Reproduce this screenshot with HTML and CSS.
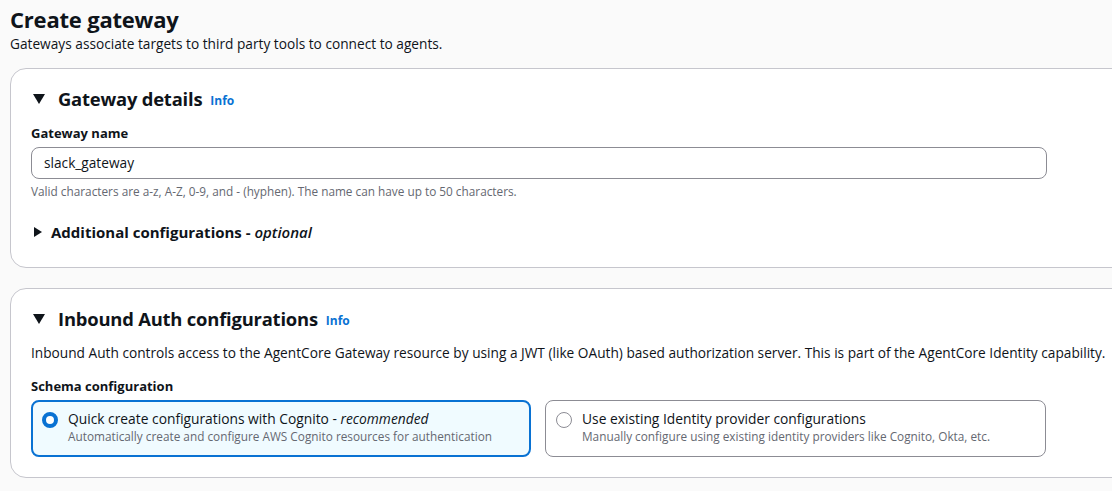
FILE: index.html
```html
<!DOCTYPE html>
<html>
<head>
<meta charset="utf-8">
<link rel="stylesheet" href="styles.css">
</head>
<body>
<div class="page">
  <header class="head">
    <h1 class="title">Create gateway</h1>
    <p class="subtitle">Gateways associate targets to third party tools to connect to agents.</p>
  </header>

  <section class="card card-details">
    <div class="card-head">
      <span class="caret caret-down"></span>
      <h2 class="card-title">Gateway details</h2>
      <a class="info">Info</a>
    </div>
    <div class="field">
      <label class="label">Gateway name</label>
      <div class="input">slack_gateway</div>
      <div class="hint">Valid characters are a-z, A-Z, 0-9, and - (hyphen). The name can have up to 50 characters.</div>
    </div>
    <div class="expander">
      <span class="caret caret-right"></span>
      <span class="exp-title">Additional configurations - <i>optional</i></span>
    </div>
  </section>

  <section class="card card-auth">
    <div class="card-head">
      <span class="caret caret-down"></span>
      <h2 class="card-title">Inbound Auth configurations</h2>
      <a class="info">Info</a>
    </div>
    <p class="desc">Inbound Auth controls access to the AgentCore Gateway resource by using a JWT (like OAuth) based authorization server. This is part of the AgentCore Identity capability.</p>
    <div class="label">Schema configuration</div>
    <div class="tiles">
      <div class="tile selected">
        <span class="radio on"></span>
        <div class="tile-text">
          <div class="tile-label">Quick create configurations with Cognito - <i>recommended</i></div>
          <div class="tile-desc">Automatically create and configure AWS Cognito resources for authentication</div>
        </div>
      </div>
      <div class="tile">
        <span class="radio"></span>
        <div class="tile-text">
          <div class="tile-label">Use existing Identity provider configurations</div>
          <div class="tile-desc">Manually configure using existing identity providers like Cognito, Okta, etc.</div>
        </div>
      </div>
    </div>
  </section>
</div>
</body>
</html>
```

FILE: styles.css
```css
* { box-sizing: border-box; }
html, body { margin: 0; padding: 0; }
body {
  background: #fafafa;
  font-family: "Open Sans", "Noto Sans", Arial, sans-serif;
  color: #0f141a;
  overflow: hidden;
  width: 1112px;
  height: 491px;
}
.page {
  padding: 4px 0 0 10px;
  width: 1140px;
}
.head { margin-bottom: 14px; }
.title {
  margin: 0;
  font-size: 22px;
  line-height: 30px;
  font-weight: 700;
  letter-spacing: -0.2px;
}
.subtitle {
  margin: 0;
  font-size: 13.7px;
  line-height: 20px;
  color: #0f141a;
}
.card {
  background: #fff;
  border: 1px solid #c6c6cd;
  border-radius: 16px;
  padding: 16px 20px 0 20px;
  margin-bottom: 20px;
}
.card-details { height: 200px; }
.card-auth { height: 190px; }
.card-head {
  display: flex;
  align-items: center;
  height: 28px;
  margin-top: 0;
}
.caret {
  display: inline-block;
  width: 0; height: 0;
}
.caret-down {
  border-left: 6px solid transparent;
  border-right: 6px solid transparent;
  border-top: 10px solid #0f141a;
  margin-left: 2px;
  margin-right: 13px;
}
.caret-right {
  border-top: 5px solid transparent;
  border-bottom: 5px solid transparent;
  border-left: 8px solid #0f141a;
  margin-left: 3px;
  margin-right: 9px;
}
.card-title {
  margin: 0;
  font-size: 18.4px;
  font-weight: 700;
  line-height: 28px;
  letter-spacing: -0.2px;
}
.info {
  color: #0972d3;
  font-size: 12px;
  font-weight: 700;
  margin-left: 8px;
  margin-top: 3px;
}
.field { margin-top: 10px; }
.label {
  display: block;
  font-size: 13px;
  font-weight: 700;
  line-height: 20px;
  margin-bottom: 4px;
}
.input {
  width: 1016px;
  height: 32px;
  border: 1px solid #8c8c94;
  border-radius: 8px;
  padding: 0 12px;
  font-size: 13.7px;
  line-height: 30px;
  background: #fff;
}
.hint {
  font-size: 11.8px;
  color: #656871;
  line-height: 16px;
  margin-top: 4px;
}
.expander {
  display: flex;
  align-items: center;
  margin-top: 22px;
  height: 22px;
}
.exp-title {
  font-size: 15px;
  font-weight: 700;
}
.exp-title i { font-weight: 600; }
.desc {
  margin: 10px 0 0 0;
  font-size: 13.7px;
  line-height: 20px;
}
.card-auth .label { margin-top: 13px; margin-bottom: 4px; }
.tiles {
  display: flex;
  gap: 14px;
}
.tile {
  width: 501px;
  height: 57px;
  border: 1px solid #8c8c94;
  border-radius: 8px;
  display: flex;
  align-items: flex-start;
  padding: 8px 12px 0 12px;
  background: #fff;
}
.tile.selected {
  width: 500px;
  border: 2px solid #0972d3;
  background: #f0fbff;
  padding: 7px 11px 0 9px;
}
.tile:not(.selected) { padding-left: 10px; }
.radio {
  width: 16px; height: 16px;
  border-radius: 50%;
  border: 1px solid #8c8c94;
  background: #fff;
  margin-top: 3px;
  margin-right: 10px;
  flex: none;
}
.radio.on {
  border: 4px solid #0972d3;
}
.tile-label {
  font-size: 13.8px;
  line-height: 20px;
}
.tile-desc {
  font-size: 11.8px;
  line-height: 14px;
  color: #656871;
}
```
